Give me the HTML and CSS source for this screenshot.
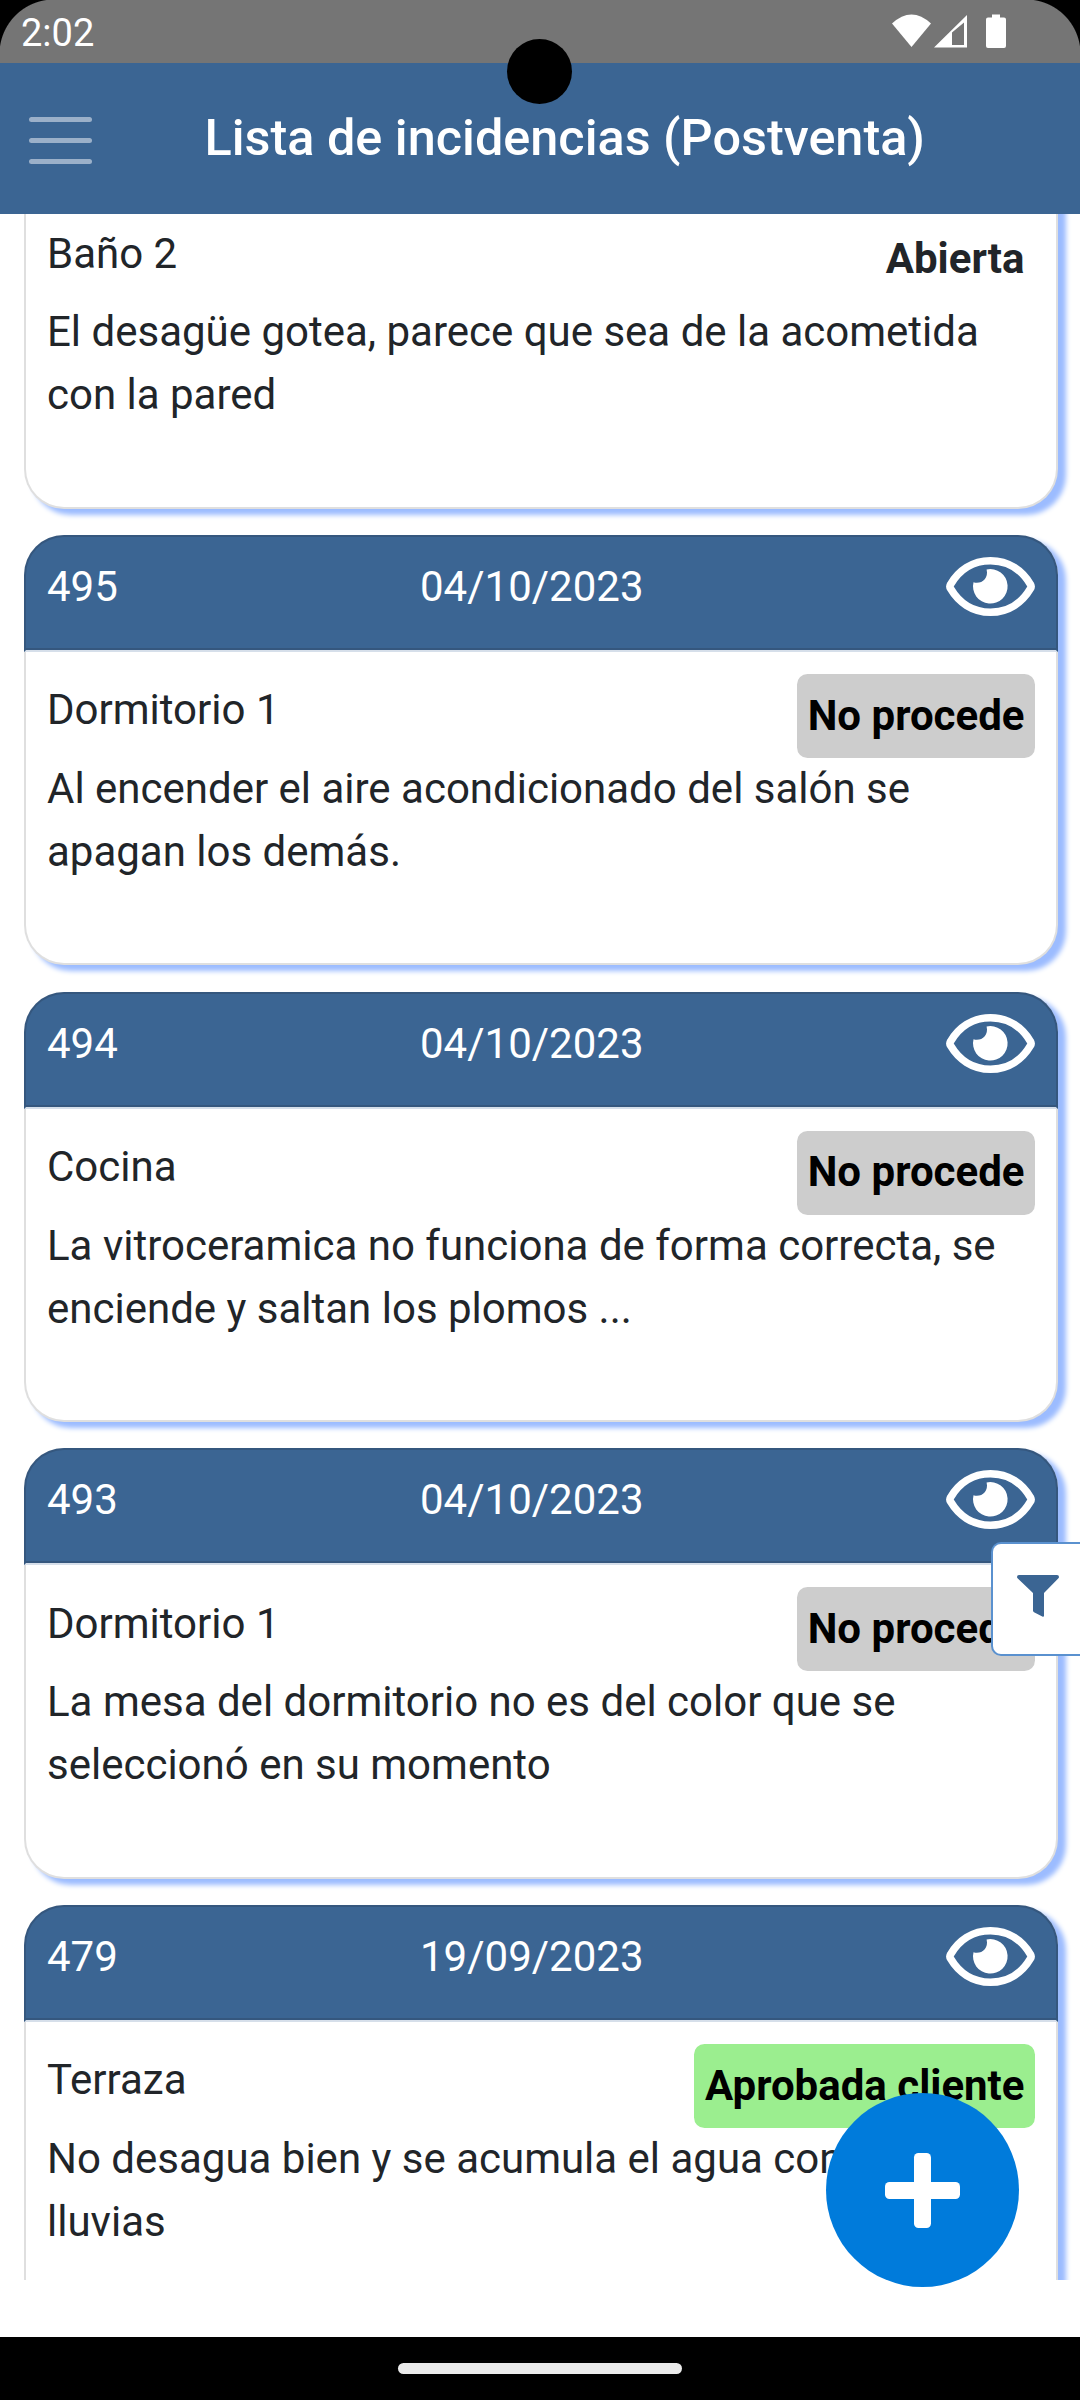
FILE: index.html
```html
<!DOCTYPE html>
<html lang="es">
<head>
<meta charset="utf-8">
<title>Lista de incidencias</title>
<link rel="stylesheet" href="styles.css">
</head>
<body>
<svg class="defs" width="0" height="0" aria-hidden="true">
  <symbol id="eye" viewBox="0 0 89 59">
    <path fill="none" stroke="#fff" stroke-width="7.6" stroke-linejoin="round" d="M4.6 27.4C12.500 14 26 3.800 44.500 3.800S76.500 14 84.400 27.400Q85.800 29.500 84.400 31.600C76.500 45 63 55.200 44.500 55.200S12.500 45 4.600 31.600Q3.200 29.500 4.600 27.400Z"/>
    <path fill="#fff" d="M40.600 12.400A17.300 17.300 0 1 1 27.500 25.200C34.500 27.600 43 22 40.600 12.400Z"/>
  </symbol>
</svg>
<div class="screen">
  <div class="statusbar">
    <span class="clock">2:02</span>
    <svg class="status-icons" width="116" height="36" viewBox="0 0 116 36" fill="#fff">
      <path d="M0 9.500Q19.500-8.500 39 9.500L19.500 33Z"/>
      <path fill-rule="evenodd" d="M42 33.500L75 1V33.500ZM60 18.500V31H72V8.500Z"/>
      <path d="M100 0.500h8v3h4a2 2 0 0 1 2 2v26.500a2 2 0 0 1-2 2h-16a2 2 0 0 1-2-2v-26.500a2 2 0 0 1 2-2h4z"/>
    </svg>
  </div>
  <header class="appbar">
    <div class="menu"><i></i><i></i><i></i></div>
    <h1>Lista de incidencias (Postventa)</h1>
  </header>
  <main class="list">
    <article class="card">
      <div class="card-head"></div>
      <div class="card-body">
        <div class="row"><span>Baño 2</span><b class="badge">Abierta</b></div>
        <p>El desagüe gotea, parece que sea de la acometida con la pared</p>
      </div>
    </article>
    <article class="card">
      <div class="card-head"><span>495</span><span class="date">04/10/2023</span><svg class="eye"><use href="#eye"/></svg></div>
      <div class="card-body">
        <div class="row"><span>Dormitorio 1</span><b class="badge rejected">No procede</b></div>
        <p>Al encender el aire acondicionado del salón se apagan los demás.</p>
      </div>
    </article>
    <article class="card">
      <div class="card-head"><span>494</span><span class="date">04/10/2023</span><svg class="eye"><use href="#eye"/></svg></div>
      <div class="card-body">
        <div class="row"><span>Cocina</span><b class="badge rejected">No procede</b></div>
        <p>La vitroceramica no funciona de forma correcta, se enciende y saltan los plomos ...</p>
      </div>
    </article>
    <article class="card">
      <div class="card-head"><span>493</span><span class="date">04/10/2023</span><svg class="eye"><use href="#eye"/></svg></div>
      <div class="card-body">
        <div class="row"><span>Dormitorio 1</span><b class="badge rejected">No procede</b></div>
        <p>La mesa del dormitorio no es del color que se<br>seleccionó en su momento</p>
      </div>
    </article>
    <article class="card">
      <div class="card-head"><span>479</span><span class="date">19/09/2023</span><svg class="eye"><use href="#eye"/></svg></div>
      <div class="card-body">
        <div class="row"><span>Terraza</span><b class="badge approved">Aprobada cliente</b></div>
        <p>No desagua bien y se acumula el agua con las<br>lluvias</p>
      </div>
    </article>
  </main>
  <footer class="navbar"><div class="handle"></div></footer>
  <div class="filter">
    <svg width="42" height="42" viewBox="0 0 42 42"><path fill="#3b6593" d="M2 0H40Q42 0 42 2Q42 2.800 41.200 3.600L27 18V40.500Q27 42.300 25.300 41.500L17 37.300Q16 36.600 16 35.500V18L.8 3.600Q0 2.800 0 2Q0 0 2 0Z"/></svg>
  </div>
  <div class="fab">
    <svg width="75" height="75" viewBox="0 0 75 75" fill="#fff"><rect x="29" width="17" height="75" rx="4.500"/><rect y="29" width="75" height="17" rx="4.500"/></svg>
  </div>
  <div class="camera"></div>
</div>
</body>
</html>
```
FILE: styles.css
```css
* { box-sizing: border-box; }
body { margin: 0; background: #000; font-family: Roboto, "Liberation Sans", sans-serif; }
.defs { display: block; }
.screen {
  position: relative;
  width: 1080px;
  height: 2400px;
  display: flex;
  flex-direction: column;
  background: #fff;
  color: #212529;
  font-size: 42px;
  line-height: 63px;
  overflow: hidden;
}
.statusbar {
  flex: none;
  height: 63px;
  display: flex;
  justify-content: space-between;
  background: radial-gradient(circle at 54px 54px, #757575 54px, #000 55px) 0 0 / 54px 54px no-repeat,
    radial-gradient(circle at 0 54px, #757575 54px, #000 55px) 100% 0 / 54px 54px no-repeat, #757575;
  padding: 0 72px 0 21px;
  color: #fff;
}
.clock { font-size: 38px; line-height: 67px; }
.status-icons { margin-top: 14px; }
.appbar {
  flex: none;
  height: 151px;
  display: flex;
  align-items: center;
  background: #3b6593;
  color: #fff;
  padding-left: 29px;
}
.menu { width: 63px; display: flex; flex-direction: column; gap: 15.500px; margin-top: 4px; }
.menu i { height: 5.500px; border-radius: 3px; background: #9bb0c9; }
.appbar h1 { margin: 0 0 3px 112.500px; font-size: 50.400px; font-weight: 500; white-space: nowrap; }
.list {
  flex: none;
  height: 2066px;
  overflow: hidden;
  padding: 0 22px 0 24px;
}
/* The list is scrolled so that the first card is partly under the app bar. */
.card:first-child { margin-top: -135.800px; }
.card {
  height: 430.300px;
  margin-bottom: 26.400px;
  border: 2px solid rgba(0, 0, 0, .125);
  border-radius: 40px;
  background: #fff;
  background-clip: border-box;
  box-shadow: 7.900px 5.250px 5.250px #9cbcff;
}
.card-head {
  margin: -2px -2px 0;
  height: 117px;
  border: 2px solid #35577e;
  border-bottom: 2px solid #d6dfea;
  border-radius: 40px 40px 0 0;
  background: #3b6593;
  box-shadow: inset 0 -2px #35577e;
  color: #fff;
  display: grid;
  grid-template-columns: 329px 329px 330px;
  padding: 18px 21px 0;
}
.date { margin-left: 44px; }
.eye { width: 89px; height: 59px; justify-self: end; margin-top: 2px; }
.card-body { padding: 22px 21px 0; }
.row { display: flex; justify-content: space-between; align-items: flex-start; height: 83px; }
.row span { margin-top: 4.400px; }
.badge { height: 84px; padding: 9.900px 10.500px; border-radius: 10.500px; font-weight: 700; }
.rejected { background: #cdcdcd; color: #000; }
.approved { background: #9bee8f; color: #000; }
.card-body p { margin: 0; }
.navbar {
  margin-top: auto;
  height: 63px;
  background: #000;
  display: flex;
  justify-content: center;
  align-items: center;
}
.handle { width: 284px; height: 11px; border-radius: 6px; background: #ebebeb; }
.filter {
  position: absolute;
  left: 991px;
  top: 1542px;
  width: 89px;
  height: 114px;
  padding: 31px 0 0 24px;
  border: 2px solid #5a91cf;
  border-right: 0;
  border-radius: 10px 0 0 10px;
  background: #fff;
}
.filter svg, .fab svg { display: block; }
.fab {
  position: absolute;
  left: 826px;
  top: 2093px;
  width: 193px;
  height: 194px;
  border-radius: 50%;
  background: #007bdb;
  display: grid;
  place-items: center;
}
.camera {
  position: absolute;
  left: 507px;
  top: 39px;
  width: 65px;
  height: 65px;
  border-radius: 50%;
  background: #000;
}
```
